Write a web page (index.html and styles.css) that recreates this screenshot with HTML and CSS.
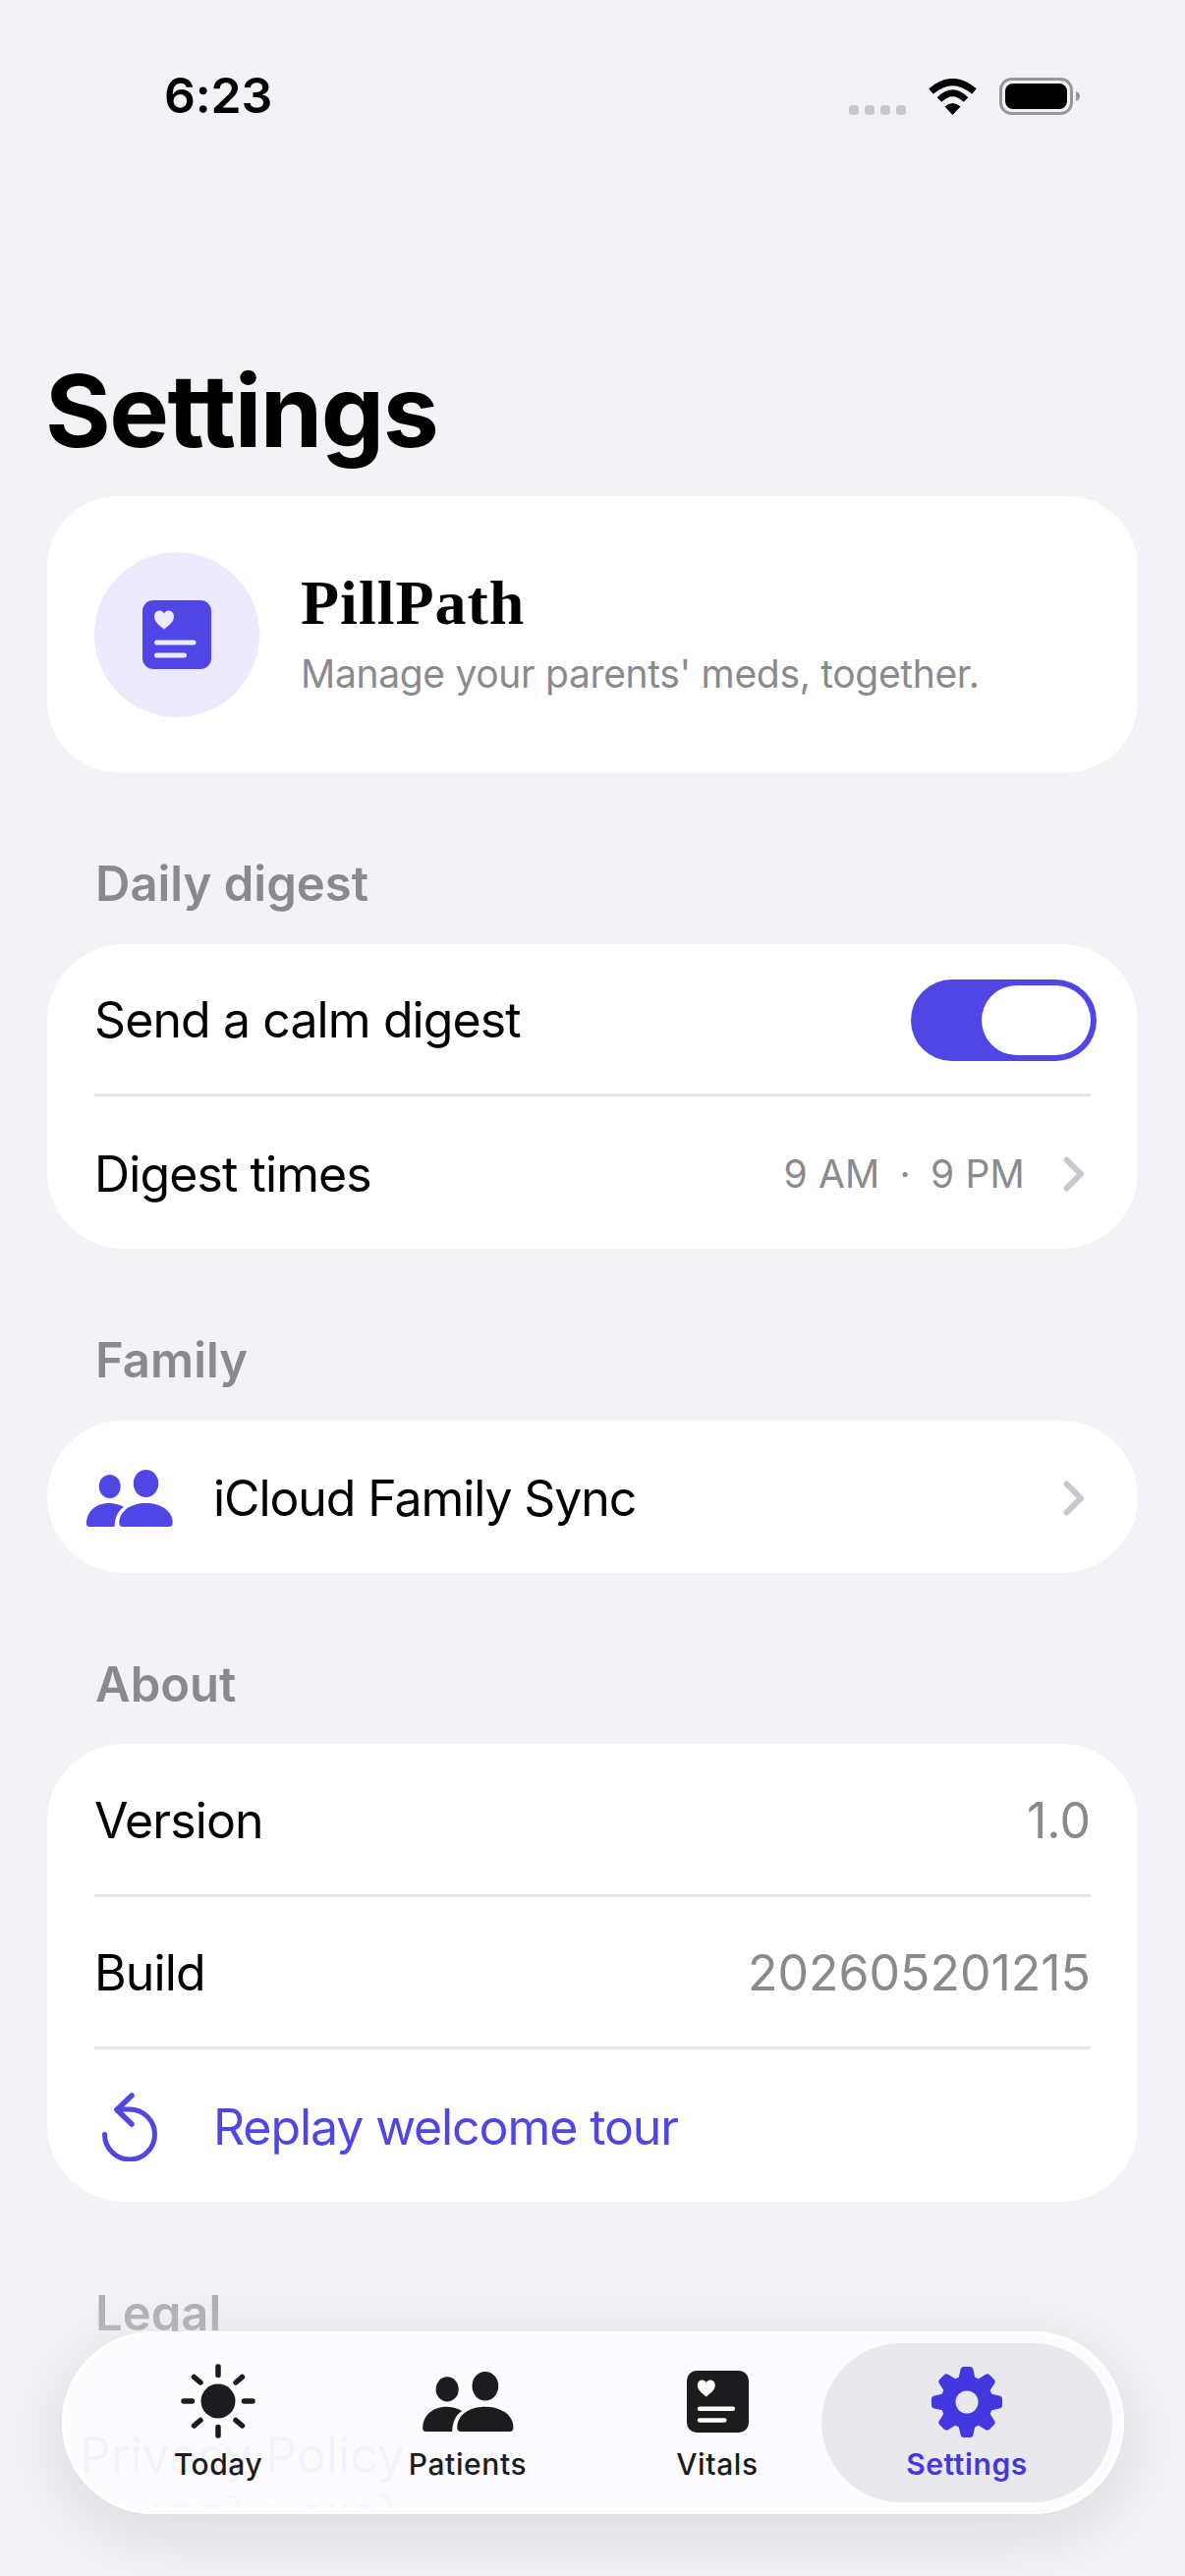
FILE: index.html
```html
<!DOCTYPE html>
<html lang="en">
<head>
<meta charset="utf-8">
<title>Settings</title>
<link rel="stylesheet" href="styles.css">
</head>
<body>
<div class="phone">
  <div class="status">
    <span class="time">6:23</span>
    <div class="status-right">
      <div class="dots"><i></i><i></i><i></i><i></i></div>
      <svg class="wifi" viewBox="0 0 51 37"><path d="M3.5 13Q25.5-6 47.5 13" fill="none" stroke="#000" stroke-width="7"/><path d="M12 21.5Q25.5 8 39 21.5" fill="none" stroke="#000" stroke-width="6.5"/><path d="M25.5 37L17.5 28.5Q25.5 21.5 33.5 28.5Z"/></svg>
      <svg class="battery" viewBox="0 0 83 38"><rect x="1.5" y="1.5" width="72" height="35" rx="11" fill="none" stroke="#97979b" stroke-width="3"/><rect x="6" y="6" width="63" height="26" rx="8"/><path d="M78 14c3 1 4 3 4 5s-1 4-4 5z" fill="#97979b"/></svg>
    </div>
  </div>

  <h1 class="title">Settings</h1>

  <section class="card brand">
    <div class="brand-icon">
      <svg viewBox="0 0 70 70" class="logo"><rect width="70" height="70" rx="11" fill="#4f46e5"/><path class="heart" d="M22 29.5C15 24 12 21 12 16.500 12 12.500 15 10.500 17.500 10.500 19.500 10.500 21 11.500 22 13.500 23 11.500 24.500 10.500 26.500 10.500 29 10.500 32 12.500 32 16.500 32 21 29 24 22 29.500Z" fill="#ede9fe"/><rect x="12" y="40.500" width="42.500" height="5" rx="2.500" fill="#ede9fe"/><rect x="12" y="53.500" width="33" height="5" rx="2.500" fill="#ede9fe"/></svg>
    </div>
    <div class="brand-text">
      <div class="brand-name">PillPath</div>
      <div class="brand-sub">Manage your parents' meds, together.</div>
    </div>
  </section>

  <h2 class="label">Daily digest</h2>
  <section class="card">
    <div class="row">
      <span>Send a calm digest</span>
      <div class="toggle"><div class="thumb"></div></div>
    </div>
    <div class="row">
      <span>Digest times</span>
      <div class="right">
        <div class="times"><span>9 AM</span><span>·</span><span>9 PM</span></div>
        <svg class="chev" viewBox="0 0 22 36"><path d="M3.500 3.500L18 18 3.500 32.500" fill="none" stroke="#c7c7cc" stroke-width="6" stroke-linecap="round" stroke-linejoin="round"/></svg>
      </div>
    </div>
  </section>

  <h2 class="label">Family</h2>
  <section class="card">
    <div class="row row-icon">
      <svg class="people" viewBox="0 0 88 58"><ellipse cx="23.700" cy="17" rx="11" ry="12"/><ellipse cx="60.500" cy="14" rx="12.700" ry="14"/><path d="M0 55C0 43 9 34 23 34c5 0 10 1 15 4-6 4-9 10-9.500 20H3q-3 0-3-3z"/><path d="M33.300 54c0-12 11.700-20 27.200-20s27.200 8 27.200 20q0 4-3.700 4H37q-3.700 0-3.700-4z"/></svg>
      <span class="row-text">iCloud Family Sync</span>
      <svg class="chev" viewBox="0 0 22 36"><path d="M3.500 3.500L18 18 3.500 32.500" fill="none" stroke="#c7c7cc" stroke-width="6" stroke-linecap="round" stroke-linejoin="round"/></svg>
    </div>
  </section>

  <h2 class="label">About</h2>
  <section class="card">
    <div class="row"><span>Version</span><span class="value">1.0</span></div>
    <div class="row"><span>Build</span><span class="value">202605201215</span></div>
    <div class="row row-icon accent">
      <svg class="replay" viewBox="0 0 58 70"><path d="M2.500 42.500A25.500 25.500 0 1 0 28 17H15" fill="none" stroke="#4f46e5" stroke-width="5" stroke-linecap="round"/><path d="M30 3L15 17.500 30 32" fill="none" stroke="#4f46e5" stroke-width="5.500" stroke-linecap="round" stroke-linejoin="round"/></svg>
      <span class="row-text">Replay welcome tour</span>
    </div>
  </section>

  <h2 class="label label-legal">Legal</h2>

  <div class="fade"></div>

  <nav class="bar">
    <span class="ghost">Privacy Policy</span>
    <span class="ghost ghost-flip">Privacy Policy</span>
    <div class="tab">
      <svg class="ic-sun" viewBox="0 0 76 76"><circle cx="38" cy="38" r="17.500" fill="#1c1c1e"/><g stroke="#1c1c1e" stroke-width="5.500" stroke-linecap="round"><path d="M38 3v8.500M38 64.500V73M3 38h8.500M64.500 38H73M13.500 13.500l6.500 5.500M56 57.500l6.500 5.500M62.500 13.500L56 19M20 57.500L13.500 63"/></g></svg>
      <span>Today</span>
    </div>
    <div class="tab">
      <svg class="ic-people" viewBox="0 0 88 58"><ellipse cx="23.700" cy="17" rx="11" ry="12"/><ellipse cx="60.500" cy="14" rx="12.700" ry="14"/><path d="M0 55C0 43 9 34 23 34c5 0 10 1 15 4-6 4-9 10-9.500 20H3q-3 0-3-3z"/><path d="M33.300 54c0-12 11.700-20 27.200-20s27.200 8 27.200 20q0 4-3.700 4H37q-3.700 0-3.700-4z"/></svg>
      <span>Patients</span>
    </div>
    <div class="tab">
      <svg class="ic-vitals" viewBox="0 0 70 70"><rect width="70" height="70" rx="11" fill="#1c1c1e"/><path d="M22 29.500C15 24 12 21 12 16.500 12 12.500 15 10.500 17.500 10.500 19.500 10.500 21 11.500 22 13.500 23 11.500 24.500 10.500 26.500 10.500 29 10.500 32 12.500 32 16.500 32 21 29 24 22 29.500Z" fill="#fff"/><rect x="12" y="40.500" width="42.500" height="5" rx="2.500" fill="#fff"/><rect x="12" y="53.500" width="33" height="5" rx="2.500" fill="#fff"/></svg>
      <span>Vitals</span>
    </div>
    <div class="tab tab-active">
      <svg class="ic-gear" viewBox="-37 -37 74 74"><circle r="19" fill="none" stroke="#4338e0" stroke-width="15"/><g fill="#4338e0"><path d="M-9-22L-6.500-33Q-6-36-3-36H3Q6-36 6.500-33L9-22Z"/><path transform="rotate(45)" d="M-9-22L-6.500-33Q-6-36-3-36H3Q6-36 6.500-33L9-22Z"/><path transform="rotate(90)" d="M-9-22L-6.500-33Q-6-36-3-36H3Q6-36 6.500-33L9-22Z"/><path transform="rotate(135)" d="M-9-22L-6.500-33Q-6-36-3-36H3Q6-36 6.500-33L9-22Z"/><path transform="rotate(180)" d="M-9-22L-6.500-33Q-6-36-3-36H3Q6-36 6.500-33L9-22Z"/><path transform="rotate(225)" d="M-9-22L-6.500-33Q-6-36-3-36H3Q6-36 6.500-33L9-22Z"/><path transform="rotate(270)" d="M-9-22L-6.500-33Q-6-36-3-36H3Q6-36 6.500-33L9-22Z"/><path transform="rotate(315)" d="M-9-22L-6.500-33Q-6-36-3-36H3Q6-36 6.500-33L9-22Z"/></g></svg>
      <span>Settings</span>
    </div>
  </nav>
</div>
</body>
</html>
```

FILE: styles.css
```css
* { box-sizing: border-box; }
html, body { margin: 0; padding: 0; }
body { background: #f2f2f7; font-family: Inter, "Noto Sans", sans-serif; color: #000; }
.phone { position: relative; width: 1206px; height: 2622px; overflow: hidden; background: #f2f2f7; padding: 0 48px; }

.status { height: 120px; padding: 74px 0 0 119px; display: flex; justify-content: space-between; align-items: flex-start; }
.time { font-size: 50px; font-weight: 600; line-height: 46px; letter-spacing: -.2px; }
.status-right { display: flex; align-items: flex-end; margin-right: 58px; margin-top: 5px; }
.dots { display: flex; gap: 6px; margin-right: 22px; }
.dots i { width: 10px; height: 10px; border-radius: 3.5px; background: #c7c7cc; }
.wifi { width: 51px; height: 37px; margin-right: 22px; }
.battery { width: 83px; height: 38px; }

.title { margin: 237px 0 26px -2px; font-size: 102px; font-weight: 700; line-height: 122px; letter-spacing: -1.5px; }

.card { background: #fff; border-radius: 78px; overflow: hidden; }
.brand { height: 281px; display: flex; align-items: center; padding: 0 48px; gap: 42px; border-radius: 72px; }
.brand-icon { width: 168px; height: 168px; border-radius: 50%; background: #ede9fe; display: flex; align-items: center; justify-content: center; }
.logo { width: 70px; height: 70px; display: block; }
.brand-name { font-family: "Liberation Serif", serif; font-size: 64px; font-weight: 700; line-height: 70px; letter-spacing: 1px; margin-top: -2px; }
.brand-sub { font-size: 39px; line-height: 50px; color: #8a8a8e; margin-top: 12px; letter-spacing: -.33px; }

.label { margin: 84px 0 30.5px 49px; font-size: 49px; font-weight: 600; line-height: 60px; color: #8a8a8e; }

.row { height: 155.33px; margin: 0 48px; padding-top: 3px; display: flex; align-items: center; justify-content: space-between; font-size: 50px; letter-spacing: -.9px; }
.row:not(:last-child) { border-bottom: 3px solid #e5e5ea; }
.row-icon { justify-content: flex-start; position: relative; }
.row-text { position: absolute; left: 121px; letter-spacing: -1.1px; }
.row .chev { margin-left: auto; }
.right { display: flex; align-items: center; }
.value { color: #8a8a8e; letter-spacing: 0; }
.times { display: flex; gap: 20px; font-size: 39px; letter-spacing: .2px; color: #8a8a8e; margin-right: 39px; }
.chev { width: 22px; height: 36px; margin-right: 6px; display: block; }
.people { width: 88px; height: 58px; margin-left: -8px; fill: #4f46e5; }
.replay { width: 58px; height: 70px; margin-left: 8px; }
.accent { color: #4f46e5; }

.toggle { width: 189px; height: 83px; margin-right: -6px; border-radius: 42px; background: #4f46e5; padding: 6px; display: flex; justify-content: flex-end; }
.thumb { width: 111px; height: 71px; border-radius: 36px; background: #fff; }

.label-legal { color: #a0a0a5; }

.fade { position: absolute; left: 0; right: 0; top: 2280px; bottom: 0; background: linear-gradient(to bottom, rgba(242,242,247,0) 0, rgba(242,242,247,.3) 90px, #f2f2f7 120px); }

.bar { position: absolute; left: 63px; top: 2373px; width: 1081px; height: 186px; border-radius: 93px; background: rgba(252,252,255,.97); padding: 12px 33px 12px 32px; display: grid; grid-template-columns: repeat(4, 254px); box-shadow: 0 16px 72px rgba(0,0,0,.11), inset 0 0 0 3px #fff; }
.ghost { position: absolute; left: 18px; top: 96px; font-size: 50px; line-height: 60px; color: rgba(79,70,229,.05); }
.ghost-flip { top: 164px; height: 16px; display: flex; align-items: flex-end; overflow: hidden; transform: scaleY(-1); clip-path: inset(0 0 0 73px); }
.tab { position: relative; display: flex; flex-direction: column; align-items: center; font-size: 30px; font-weight: 500; line-height: 40px; color: #1c1c1e; }
.tab svg { display: block; position: relative; }
.tab span { position: absolute; top: 103px; letter-spacing: .6px; }
.tab-active { color: #4338e0; font-weight: 600; }
.tab-active::before { content: ""; position: absolute; top: 0; bottom: 0; left: -21px; right: -21px; border-radius: 81px; background: #e9e9ed; }
.ic-sun { width: 76px; height: 76px; margin-top: 21px; }
.ic-people { width: 93px; height: 61px; margin-top: 29px; fill: #1c1c1e; }
.ic-vitals { width: 63px; height: 63px; margin-top: 28px; }
.ic-gear { width: 74px; height: 74px; margin-top: 23px; }
```
